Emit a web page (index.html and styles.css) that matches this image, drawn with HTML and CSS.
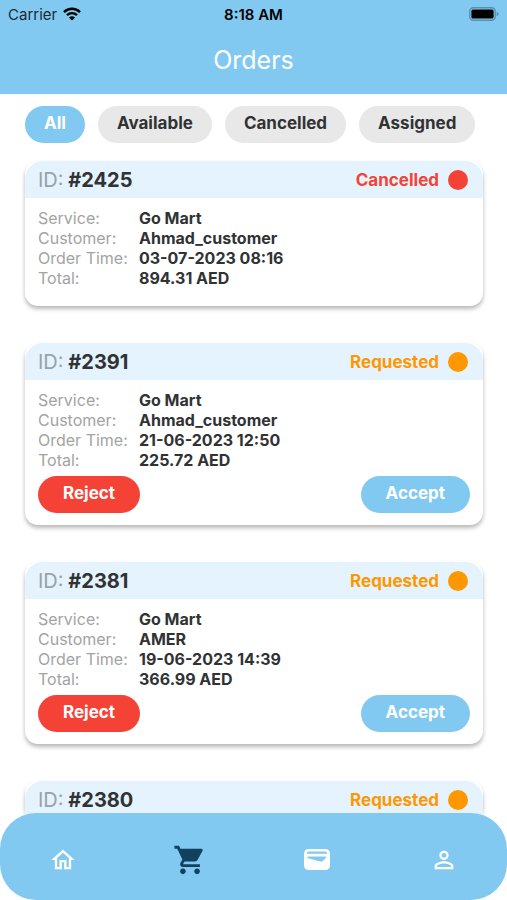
FILE: index.html
```html
<!DOCTYPE html>
<html lang="en">
<head>
<meta charset="utf-8">
<meta name="viewport" content="width=device-width, initial-scale=1">
<title>Orders</title>
<link rel="stylesheet" href="styles.css">
</head>
<body>
<header class="top">
  <div class="status-bar">
    <div class="carrier">
      <span>Carrier</span>
      <svg class="wifi" viewBox="0 0 18 14" aria-hidden="true">
        <path d="M1 5.1a11.4 11.4 0 0 1 16 0" fill="none" stroke="#000" stroke-width="2.5"/>
        <path d="M4 8.2a7.1 7.1 0 0 1 10 0" fill="none" stroke="#000" stroke-width="2.4"/>
        <path d="M9 13.6 6 10.6a4.3 4.3 0 0 1 6 0Z"/>
      </svg>
    </div>
    <span class="clock">8:18 AM</span>
    <svg class="battery" viewBox="0 0 30 14" aria-hidden="true">
      <rect x="0.8" y="0.8" width="25.4" height="12.4" rx="3.6" fill="none" stroke="#5a8fae" stroke-width="1.4"/>
      <rect x="2.4" y="2.4" width="22.2" height="9.200" rx="1.6"/>
      <path d="M27.6 4.8c2.6 1 2.6 3.4 0 4.4Z" fill="#5a8fae"/>
    </svg>
  </div>
  <h1 class="title">Orders</h1>
</header>

<main class="content">
  <div class="filters">
    <button class="pill filter filter-active" type="button">All</button>
    <button class="pill filter" type="button">Available</button>
    <button class="pill filter" type="button">Cancelled</button>
    <button class="pill filter" type="button">Assigned</button>
  </div>

  <div class="orders">
    <article class="card">
      <div class="card-head">
        <h2 class="order-id"><span class="id-label">ID:</span> #2425</h2>
        <span class="status cancelled">Cancelled</span>
      </div>
      <dl class="details">
        <dt>Service:</dt><dd>Go Mart</dd>
        <dt>Customer:</dt><dd>Ahmad_customer</dd>
        <dt>Order Time:</dt><dd>03-07-2023 08:16</dd>
        <dt>Total:</dt><dd>894.31 AED</dd>
      </dl>
    </article>

    <article class="card">
      <div class="card-head">
        <h2 class="order-id"><span class="id-label">ID:</span> #2391</h2>
        <span class="status requested">Requested</span>
      </div>
      <dl class="details">
        <dt>Service:</dt><dd>Go Mart</dd>
        <dt>Customer:</dt><dd>Ahmad_customer</dd>
        <dt>Order Time:</dt><dd>21-06-2023 12:50</dd>
        <dt>Total:</dt><dd>225.72 AED</dd>
      </dl>
      <div class="actions">
        <button class="pill action reject" type="button">Reject</button>
        <button class="pill action accept" type="button">Accept</button>
      </div>
    </article>

    <article class="card">
      <div class="card-head">
        <h2 class="order-id"><span class="id-label">ID:</span> #2381</h2>
        <span class="status requested">Requested</span>
      </div>
      <dl class="details">
        <dt>Service:</dt><dd>Go Mart</dd>
        <dt>Customer:</dt><dd>AMER</dd>
        <dt>Order Time:</dt><dd>19-06-2023 14:39</dd>
        <dt>Total:</dt><dd>366.99 AED</dd>
      </dl>
      <div class="actions">
        <button class="pill action reject" type="button">Reject</button>
        <button class="pill action accept" type="button">Accept</button>
      </div>
    </article>

    <article class="card">
      <div class="card-head">
        <h2 class="order-id"><span class="id-label">ID:</span> #2380</h2>
        <span class="status requested">Requested</span>
      </div>
    </article>
  </div>
</main>

<nav class="tab-bar">
  <a class="tab" href="#home" aria-label="Home">
    <svg class="icon" viewBox="0 0 24 24"><path d="M12 5.69l5 4.5V18h-2v-6H9v6H7v-7.81l5-4.5M12 3L2 12h3v8h6v-6h2v6h6v-8h3L12 3z"/></svg>
  </a>
  <a class="tab tab-active" href="#orders" aria-label="Orders">
    <svg class="icon icon-large" viewBox="0 0 24 24"><path d="M7 18c-1.1 0-1.99.9-1.99 2S5.9 22 7 22s2-.9 2-2-.9-2-2-2zM1 2v2h2l3.6 7.59-1.35 2.45c-.16.28-.25.61-.25.96 0 1.1.9 2 2 2h12v-2H7.42c-.14 0-.25-.11-.25-.25l.03-.12.9-1.63h7.45c.75 0 1.41-.41 1.75-1.03l3.58-6.49c.08-.14.12-.31.12-.48 0-.55-.45-1-1-1H5.21l-.94-2H1zm16 16c-1.1 0-1.99.9-1.99 2s.89 2 1.99 2 2-.9 2-2-.9-2-2-2z"/></svg>
  </a>
  <a class="tab" href="#wallet" aria-label="Wallet">
    <svg class="icon icon-wallet" viewBox="0 0 26 21"><path fill-rule="evenodd" d="M4.500 0h17A4.500 4.500 0 0 1 26 4.500v12a4.500 4.500 0 0 1-4.500 4.500h-17A4.500 4.500 0 0 1 0 16.500v-12A4.500 4.500 0 0 1 4.500 0ZM3 5.300c.8-.4 1.200-.5 2-.5h16c.8 0 1.200.1 2 .5v-.8c0-1.200-.8-2-2-2H5c-1.200 0-2 .8-2 2ZM3.200 9 16 12.600c1.300.3 2 .1 2.800-.6L22.600 8.300c-.5-.6-1-.8-1.800-.8H5c-.9 0-1.500.5-1.800 1.500Z"/></svg>
  </a>
  <a class="tab" href="#profile" aria-label="Profile">
    <svg class="icon" viewBox="0 0 24 24"><path d="M12 5.900c1.160 0 2.100.94 2.100 2.100s-.94 2.100-2.100 2.100S9.900 9.160 9.900 8s.94-2.100 2.100-2.100m0 9c2.970 0 6.100 1.460 6.100 2.100v1.100H5.900V17c0-.64 3.130-2.100 6.100-2.100M12 4C9.790 4 8 5.790 8 8s1.790 4 4 4 4-1.790 4-4-1.790-4-4-4zm0 9c-2.670 0-8 1.340-8 4v3h16v-3c0-2.660-5.330-4-8-4z"/></svg>
  </a>
</nav>
</body>
</html>
```
FILE: styles.css
```css
* {
  box-sizing: border-box;
}

body {
  position: relative;
  display: flex;
  flex-direction: column;
  height: 100vh;
  margin: 0;
  overflow: hidden;
  background: #fff;
  color: #303234;
  font-family: Inter, "Liberation Sans", sans-serif;
  font-size: 16px;
}

.top {
  flex: none;
  padding-bottom: 16px;
  background: #82c9f2;
}

.status-bar {
  display: grid;
  grid-template-columns: 1fr auto 1fr;
  align-items: center;
  height: 28px;
  padding: 0 8px;
  color: #000;
  font-size: 15px;
}

.carrier {
  display: flex;
  align-items: center;
  gap: 6px;
  color: #1b2a33;
}

.wifi {
  width: 18px;
  height: 14px;
}

.clock {
  font-weight: 600;
}

.battery {
  justify-self: end;
  width: 30px;
  height: 14px;
}

.title {
  margin: 14px 0 0;
  color: #fff;
  font-size: 25px;
  font-weight: 400;
  line-height: 36px;
  text-align: center;
}

.content {
  flex: 1;
  min-height: 0;
  padding: 12px 24px 0 25px;
  overflow-y: auto;
  scrollbar-width: none;
}

.filters {
  display: flex;
  gap: 13px;
}

.pill {
  height: 37px;
  padding: 0 19px 4px;
  border: 0;
  border-radius: 19px;
  font: inherit;
  font-size: 17px;
  font-weight: 700;
  cursor: pointer;
}

.filter {
  background: #e8e8e8;
  color: #303234;
}

.filter-active {
  background: #82c9f2;
  color: #fff;
}

.orders {
  display: flex;
  flex-direction: column;
  gap: 37px;
  padding: 18px 0 100px;
}

.card {
  border-radius: 13px;
  background: #fff;
  box-shadow: 0 3px 4px rgba(0, 0, 0, 0.28);
}

.card-head {
  display: flex;
  align-items: center;
  justify-content: space-between;
  height: 37px;
  padding: 0 15px 0 13px;
  border-radius: 18px 18px 0 0;
  background: #e4f3fd;
}

.order-id {
  margin: 0;
  font-size: 20px;
  font-weight: 700;
}

.id-label {
  color: #98a2a9;
  font-weight: 400;
}

.status {
  display: flex;
  align-items: center;
  gap: 9px;
  font-size: 17px;
  font-weight: 700;
}

.status::after {
  content: "";
  width: 20px;
  height: 20px;
  border-radius: 50%;
  background: currentColor;
}

.cancelled {
  color: #f44336;
}

.requested {
  color: #ff9800;
}

.details {
  display: grid;
  grid-template-columns: 101px 1fr;
  margin: 0;
  padding: 10px 13px 18px;
  line-height: 20px;
}

.details dt {
  color: #a3a3a3;
}

.details dd {
  margin: 0;
  font-weight: 700;
}

.actions {
  display: flex;
  justify-content: space-between;
  margin-top: -12px;
  padding: 0 13px 12px;
}

.action {
  padding: 0 25px 4px;
  color: #fff;
}

.reject {
  background: #f44336;
}

.accept {
  background: #82c9f2;
}

.tab-bar {
  position: absolute;
  right: 0;
  bottom: 0;
  left: 0;
  display: flex;
  height: 87px;
  border-radius: 36px;
  background: #82c9f2;
}

.tab {
  display: flex;
  flex: 1;
  align-items: center;
  justify-content: center;
  padding-top: 6px;
  color: #fff;
}

.tab-active {
  color: #11415f;
}

.icon {
  width: 28px;
  height: 28px;
  fill: currentColor;
}

.icon-large {
  width: 34px;
  height: 34px;
}

.icon-wallet {
  width: 26px;
  height: 21px;
}
```
